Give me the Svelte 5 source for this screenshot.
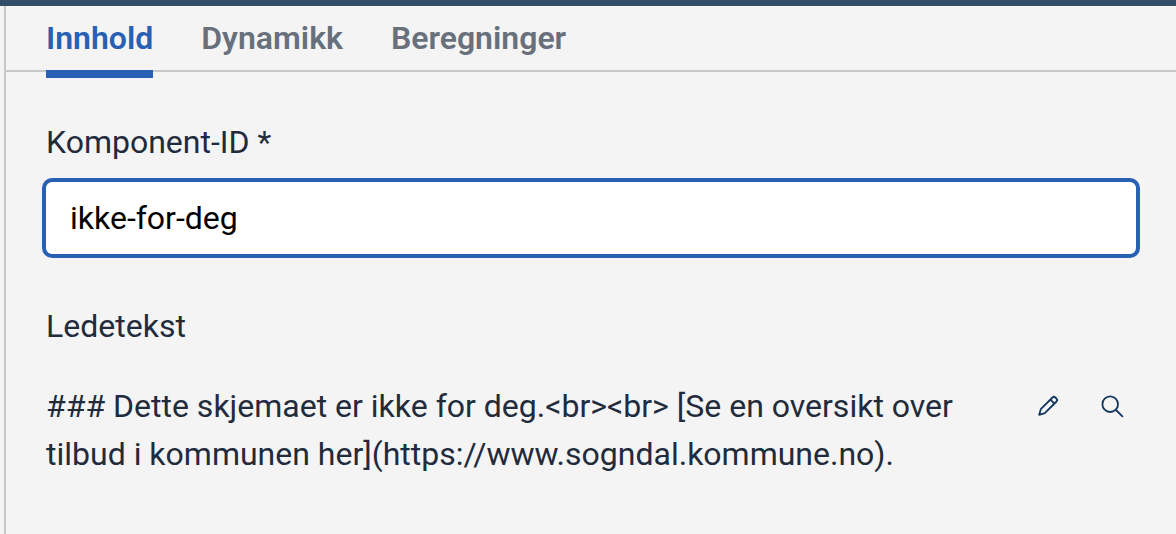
<script>
  const tabs = ['Innhold', 'Dynamikk', 'Beregninger'];
  let active = $state('Innhold');
  let componentId = $state('ikke-for-deg');
  const label = '### Dette skjemaet er ikke for deg.<br><br> [Se en oversikt over tilbud i kommunen her](https://www.sogndal.kommune.no).';
</script>

<div class="topbar"></div>
<main class="panel">
  <div class="tabs" role="tablist">
    {#each tabs as tab}
      <button type="button" role="tab" class="tab" class:active={tab === active} aria-selected={tab === active} onclick={() => (active = tab)}>{tab}</button>
    {/each}
  </div>
  <div class="content">
    <label class="label" for="component-id">Komponent-ID *</label>
    <input id="component-id" class="field" type="text" bind:value={componentId} />
    <h2 class="label">Ledetekst</h2>
    <div class="text-row">
      <p class="text">{label}</p>
      <div class="actions">
        <button type="button" class="icon-button" aria-label="Rediger">
          <svg viewBox="0 0 24 24" width="24" height="24" fill="none" stroke="currentColor" stroke-width="1.8" stroke-linejoin="round">
            <path d="M3.2 20.8l1.6-5.6L16.5 3.5a2 2 0 0 1 2.8 0l1.2 1.2a2 2 0 0 1 0 2.8L8.8 19.2zM14.4 5.6l4 4" />
          </svg>
        </button>
        <button type="button" class="icon-button" aria-label="Søk">
          <svg viewBox="0 0 24 24" width="24" height="24" fill="none" stroke="currentColor" stroke-width="1.8" stroke-linecap="round">
            <circle cx="10.2" cy="10.2" r="7.8" />
            <path d="M16 16l6.4 6.4" />
          </svg>
        </button>
      </div>
    </div>
  </div>
</main>

<style>
  :global(body) {
    margin: 0;
    background: #f4f4f4;
    font-family: Roboto, sans-serif;
  }
  .topbar {
    height: 6px;
    background: #334e68;
  }
  .panel {
    box-sizing: border-box;
    min-height: calc(100vh - 6px);
    margin-left: 4px;
    border-left: 2px solid #c8c8c8;
    color: #212b3c;
  }
  .tabs {
    display: flex;
    gap: 48px;
    height: 64px;
    padding-left: 40px;
    border-bottom: 2px solid #c8c8c8;
  }
  .tab {
    height: 72px;
    padding: 0;
    border: 0;
    border-bottom: 8px solid transparent;
    background: none;
    color: #68707c;
    font: 600 32px/48px Roboto, sans-serif;
  }
  .tab.active {
    border-bottom-color: #2860b4;
    color: #2860b4;
  }
  .content {
    padding: 46px 36px 40px;
  }
  .label {
    display: block;
    margin: 0 4px;
    font-size: 32px;
    font-weight: 400;
    line-height: 48px;
  }
  .field {
    box-sizing: border-box;
    display: block;
    width: 100%;
    height: 80px;
    margin: 12px 0 44px;
    padding: 0 24px;
    border: 4px solid #2860b4;
    border-radius: 10px;
    outline: 0;
    background: #fff;
    color: #000;
    font: 400 32px/48px Roboto, sans-serif;
  }
  .text-row {
    display: flex;
    justify-content: space-between;
    gap: 48px;
    margin: 32px 4px 0;
  }
  .text {
    max-width: 940px;
    margin: 0;
    font-size: 32px;
    line-height: 48px;
  }
  .actions {
    display: flex;
    flex: none;
    gap: 16px;
  }
  .icon-button {
    display: grid;
    place-items: center;
    width: 48px;
    height: 48px;
    padding: 0;
    border: 0;
    background: none;
    color: #12365f;
  }
</style>
